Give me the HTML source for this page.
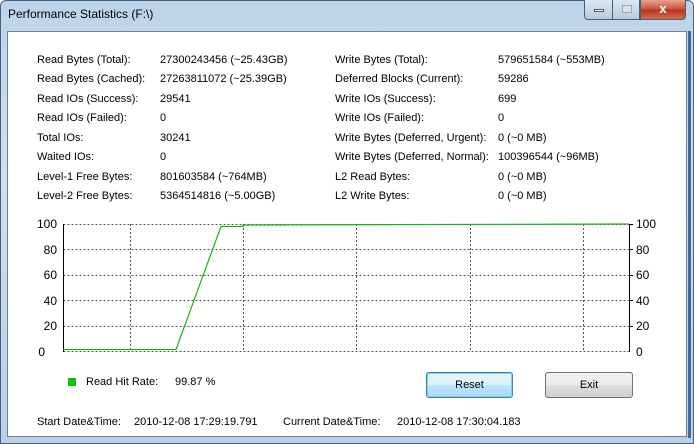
<!DOCTYPE html>
<html><head><meta charset="utf-8"><style>
*{margin:0;padding:0;box-sizing:border-box}
body{width:694px;height:444px;overflow:hidden;background:#fff;font-family:"Liberation Sans",sans-serif;font-size:11px;color:#000;position:relative}
.frame{position:absolute;left:0;top:0;width:694px;height:444px;background:linear-gradient(180deg,#bcd4ea 0%,#cfe0f0 40%,#b9d0e6 100%);border:1px solid #4a5f78;border-radius:6px 6px 0 0}
.title{position:absolute;left:8px;top:7px;font-size:12px;color:#000}
.client{position:absolute;left:7px;top:31px;width:680px;height:406px;background:#fff;border:1px solid #6f7f93}
.t{position:absolute;white-space:nowrap;line-height:13px}
.btn{position:absolute;height:26px;border:1px solid #707070;border-radius:3px;background:linear-gradient(#f2f2f2 0%,#ebebeb 50%,#dddddd 51%,#cfcfcf 100%);text-align:center;line-height:24px;font-size:11px}
.cap{position:absolute;top:0;height:20px;border:1px solid #4b5d73;border-top:none}
</style></head><body>
<div class="frame"></div>
<div style="position:absolute;left:688px;top:31px;width:3px;height:407px;background:#3d6a9c"></div>
<div class="title">Performance Statistics (F:\)</div>
<div class="cap" style="left:584px;width:29px;background:linear-gradient(#dbe6f2,#b7cbe0);border-radius:0 0 0 4px"><div style="position:absolute;left:9px;top:9px;width:10px;height:3px;background:#fff;border:1px solid #556"></div></div>
<div class="cap" style="left:612px;width:28px;background:linear-gradient(#dbe6f2,#b7cbe0)"><div style="position:absolute;left:9px;top:5px;width:10px;height:8px;border:1px solid #9aa;background:#dde"></div></div>
<div class="cap" style="left:640px;width:46px;background:linear-gradient(#e8a493,#c75038 50%,#b8321c 51%,#d36b4d);border-radius:0 0 4px 0;color:#fff;font-weight:bold;font-size:13px;text-align:center;line-height:17px">x</div>
<div class="client"></div>
<div class="t" style="left:37px;top:54px">Read Bytes (Total):</div><div class="t" style="left:160px;top:54px">27300243456 (~25.43GB)</div>
<div class="t" style="left:37px;top:73px">Read Bytes (Cached):</div><div class="t" style="left:160px;top:73px">27263811072 (~25.39GB)</div>
<div class="t" style="left:37px;top:93px">Read IOs (Success):</div><div class="t" style="left:160px;top:93px">29541</div>
<div class="t" style="left:37px;top:112px">Read IOs (Failed):</div><div class="t" style="left:160px;top:112px">0</div>
<div class="t" style="left:37px;top:132px">Total IOs:</div><div class="t" style="left:160px;top:132px">30241</div>
<div class="t" style="left:37px;top:151px">Waited IOs:</div><div class="t" style="left:160px;top:151px">0</div>
<div class="t" style="left:37px;top:171px">Level-1 Free Bytes:</div><div class="t" style="left:160px;top:171px">801603584 (~764MB)</div>
<div class="t" style="left:37px;top:190px">Level-2 Free Bytes:</div><div class="t" style="left:160px;top:190px">5364514816 (~5.00GB)</div>
<div class="t" style="left:335px;top:54px">Write Bytes (Total):</div><div class="t" style="left:498px;top:54px">579651584 (~553MB)</div>
<div class="t" style="left:335px;top:73px">Deferred Blocks (Current):</div><div class="t" style="left:498px;top:73px">59286</div>
<div class="t" style="left:335px;top:93px">Write IOs (Success):</div><div class="t" style="left:498px;top:93px">699</div>
<div class="t" style="left:335px;top:112px">Write IOs (Failed):</div><div class="t" style="left:498px;top:112px">0</div>
<div class="t" style="left:335px;top:132px">Write Bytes (Deferred, Urgent):</div><div class="t" style="left:498px;top:132px">0 (~0 MB)</div>
<div class="t" style="left:335px;top:151px">Write Bytes (Deferred, Normal):</div><div class="t" style="left:498px;top:151px">100396544 (~96MB)</div>
<div class="t" style="left:335px;top:171px">L2 Read Bytes:</div><div class="t" style="left:498px;top:171px">0 (~0 MB)</div>
<div class="t" style="left:335px;top:190px">L2 Write Bytes:</div><div class="t" style="left:498px;top:190px">0 (~0 MB)</div>
<svg style="position:absolute;left:0;top:0" width="694" height="444">
<g stroke="#555" stroke-dasharray="2,2" stroke-width="1" fill="none">
<path d="M63.5 224.5H629M63.5 249.5H629M63.5 275.5H629M63.5 300.5H629M63.5 326.5H629M63.5 351.5H629"/>
<path d="M130.5 224V351M243.5 224V351M356.5 224V351M470.5 224V351M583.5 224V351"/>
</g>
<path d="M63.5 224V352M629.5 224V352M629 224.5H633M629 249.5H633M629 275.5H633M629 300.5H633M629 326.5H633" stroke="#000" stroke-width="1"/>
<polyline points="63,349.5 176,349.5 221,226.5 243,226.5 243,225 629,224" fill="none" stroke="#19b219" stroke-width="1.2"/>
<g font-family="Liberation Sans" font-size="12" fill="#000">
<text x="57" y="228" text-anchor="end">100</text><text x="57" y="254" text-anchor="end">80</text><text x="57" y="279" text-anchor="end">60</text><text x="57" y="305" text-anchor="end">40</text><text x="57" y="330" text-anchor="end">20</text><text x="45" y="356" text-anchor="end">0</text>
<text x="636" y="228">100</text><text x="636" y="254">80</text><text x="636" y="279">60</text><text x="636" y="305">40</text><text x="636" y="330">20</text><text x="636" y="356">0</text>
</g>
</svg>
<div style="position:absolute;left:68px;top:378px;width:8px;height:8px;background:#10c010"></div>
<div class="t" style="left:86px;top:376px">Read Hit Rate:</div>
<div class="t" style="left:175px;top:376px">99.87 %</div>
<div class="btn" style="left:426px;top:372px;width:87px;border-color:#3c7fb1;background:linear-gradient(#eaf6fd 0%,#d9f0fc 50%,#bee6fd 51%,#a7d9f5 100%);box-shadow:inset 0 0 0 1px #7fd1f5">Reset</div>
<div class="btn" style="left:545px;top:372px;width:88px">Exit</div>
<div class="t" style="left:37px;top:416px">Start Date&amp;Time:</div>
<div class="t" style="left:134px;top:416px">2010-12-08 17:29:19.791</div>
<div class="t" style="left:283px;top:416px">Current Date&amp;Time:</div>
<div class="t" style="left:397px;top:416px">2010-12-08 17:30:04.183</div>
</body></html>
